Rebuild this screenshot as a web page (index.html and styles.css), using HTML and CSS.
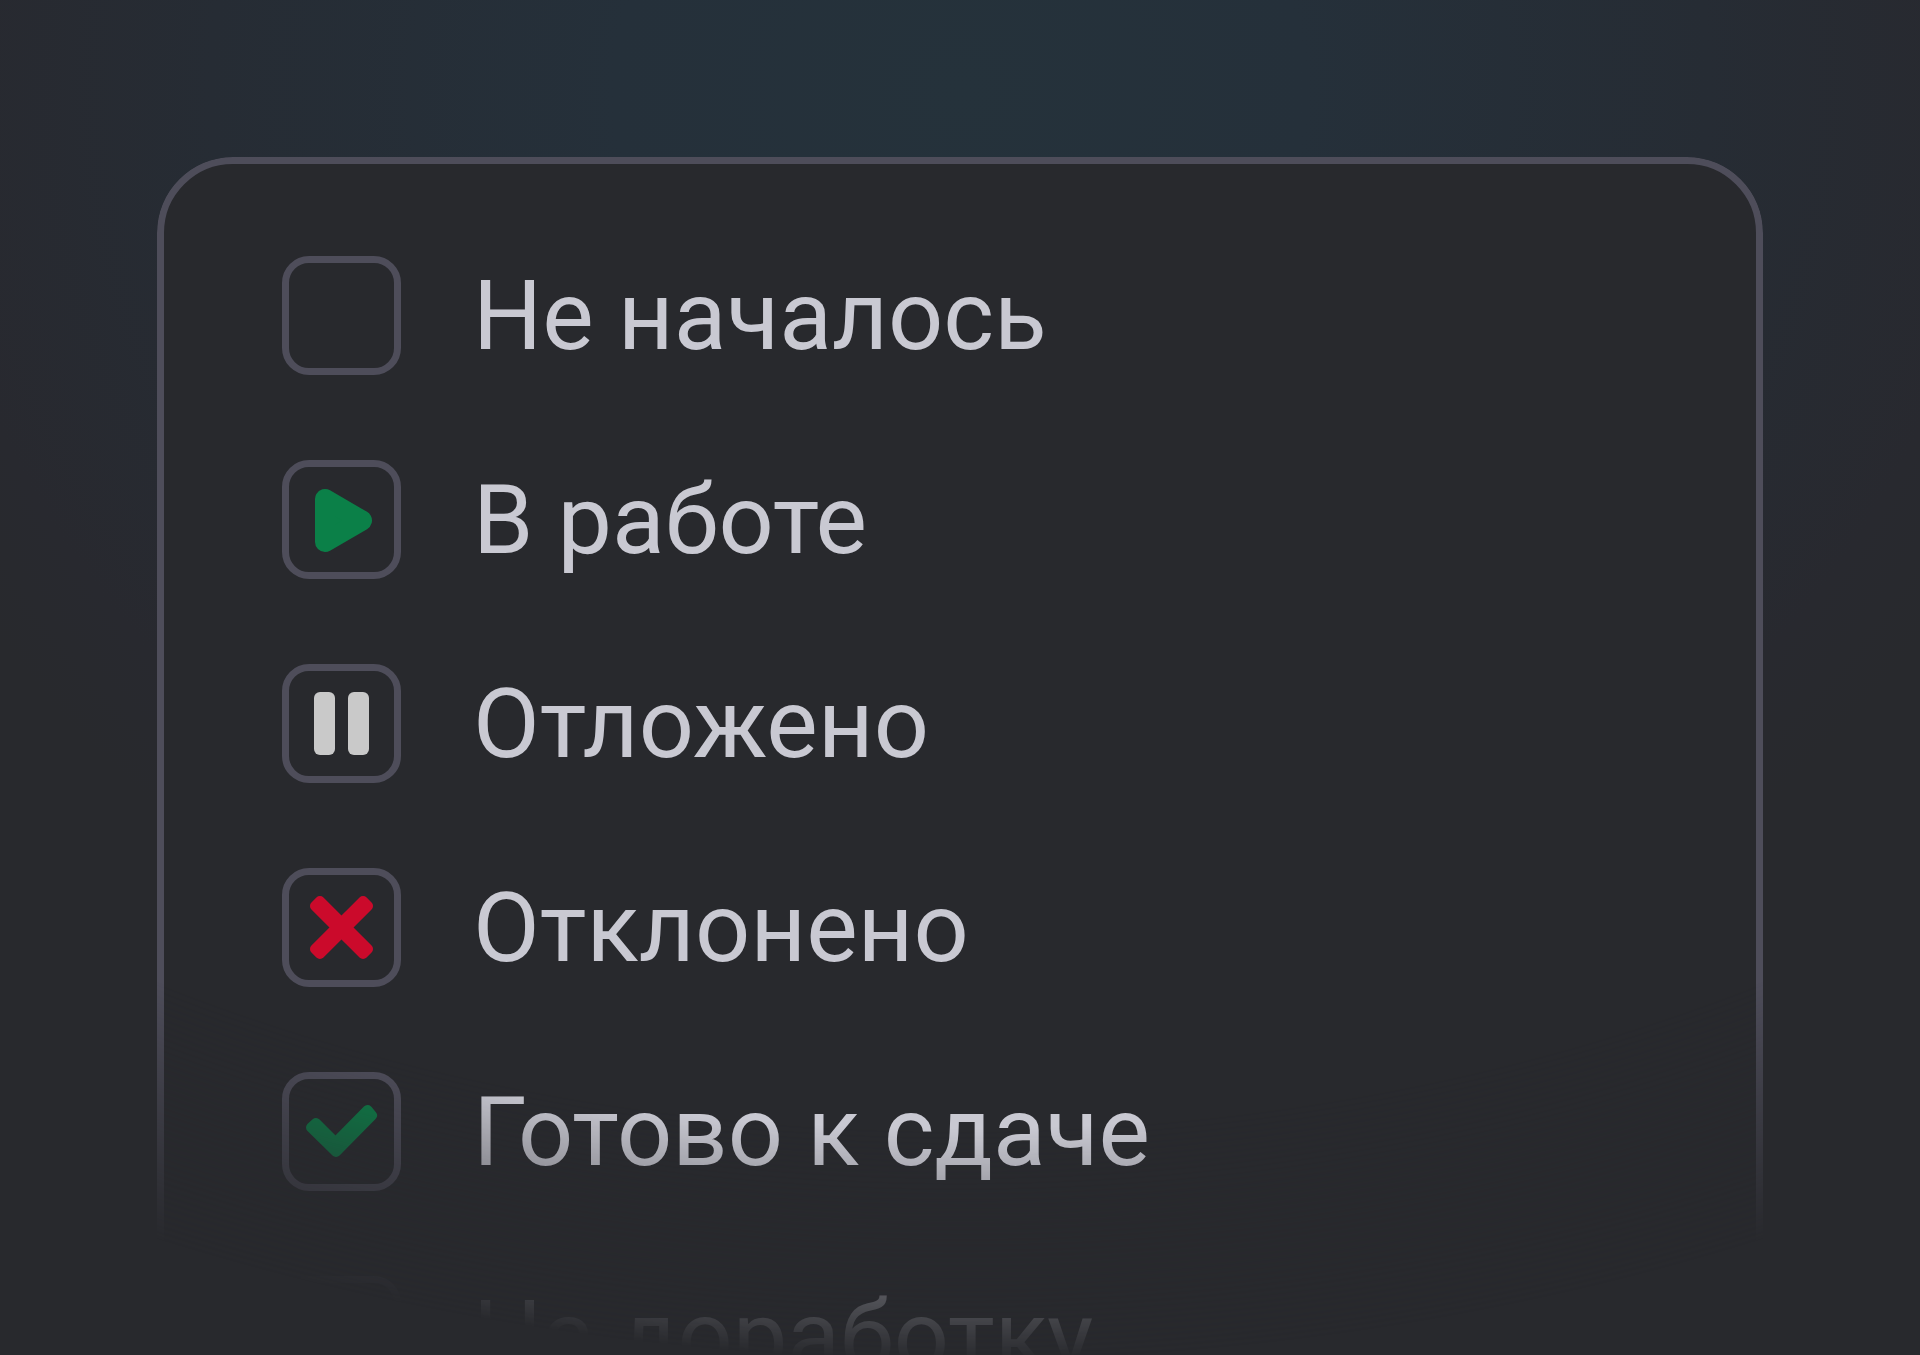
FILE: index.html
```html
<!DOCTYPE html>
<html lang="ru">
<head>
  <meta charset="UTF-8" />
  <title>Статусы задач</title>
  <meta name="viewport" content="width=device-width, initial-scale=1.0" />
  <link rel="stylesheet" href="styles.css">
</head>
<body>
  <main class="card">
    <label class="status">
      <span class="box">
        <input type="checkbox">
      </span>
      <span class="name">Не началось</span>
    </label>

    <label class="status">
      <span class="box">
        <input type="checkbox" checked>
        <svg class="icon green" viewBox="0 0 119 119" aria-hidden="true">
          <path d="M43 39 L43 82 L80 60.5 Z" stroke-width="20" />
        </svg>
      </span>
      <span class="name">В работе</span>
    </label>

    <label class="status">
      <span class="box">
        <input type="checkbox" checked>
        <svg class="icon grey" viewBox="0 0 119 119" aria-hidden="true">
          <rect x="32" y="28" width="21" height="63" rx="6" stroke="none" />
          <rect x="66" y="28" width="21" height="63" rx="6" stroke="none" />
        </svg>
      </span>
      <span class="name">Отложено</span>
    </label>

    <label class="status">
      <span class="box">
        <input type="checkbox" checked>
        <svg class="icon red" viewBox="0 0 119 119" aria-hidden="true">
          <g transform="translate(59.5 59.5) rotate(45)" stroke="none">
            <rect x="-39" y="-8.5" width="78" height="17" rx="5" />
            <rect x="-8.5" y="-39" width="17" height="78" rx="5" />
          </g>
        </svg>
      </span>
      <span class="name">Отклонено</span>
    </label>

    <label class="status">
      <span class="box">
        <input type="checkbox" checked>
        <svg class="icon green" viewBox="0 0 119 119" aria-hidden="true">
          <path d="M34 51 L53.5 70.5 L85.5 38 L90 43.5 L54 80 L29 55.5 Z" stroke-width="10" />
        </svg>
      </span>
      <span class="name">Готово к сдаче</span>
    </label>

    <label class="status">
      <span class="box">
        <input type="checkbox">
      </span>
      <span class="name">На доработку</span>
    </label>
  </main>
</body>
</html>
```
FILE: styles.css
```css
* {
  box-sizing: border-box;
}
html {
  background: #28292d;
}
body {
  margin: 0;
  height: 100vh;
  overflow: hidden;
  padding: 157px 157px 0;
  background: radial-gradient(ellipse 60% 74% at 50% 90px, #25323b 0%, #25303a 30%, #262c34 65%, #28292f 90%, #28292d 100%) no-repeat;
  color: #c9c9d2;
  font-family: Roboto, sans-serif;
}
/* the list fades out towards the bottom, sooner at the sides */
.card {
  display: flex;
  flex-direction: column;
  gap: 85px;
  padding: 92px 118px;
  border: 7px solid #4e4d5a;
  border-radius: 76px;
  background: #28292d;
  -webkit-mask-image: radial-gradient(ellipse 1950px 1360px at 50% -157px, #000 83%, transparent 100%);
  mask-image: radial-gradient(ellipse 1950px 1360px at 50% -157px, #000 83%, transparent 100%);
}
.status {
  display: flex;
  align-items: center;
  gap: 72px;
  cursor: pointer;
}
.box {
  display: grid;
  flex: none;
  width: 119px;
  height: 119px;
}
.box input,
.icon {
  grid-area: 1 / 1;
  width: 100%;
  height: 100%;
  margin: 0;
}
.box input {
  appearance: none;
  border: 7px solid #4e4d5a;
  border-radius: 27px;
}
.icon {
  fill: currentColor;
  stroke: currentColor;
  stroke-linejoin: round;
  pointer-events: none;
}
.green {
  color: #0b8048;
}
.grey {
  color: #c9c9c9;
}
.red {
  color: #cb0a2b;
}
.name {
  font-size: 97px;
  line-height: 112px;
  white-space: nowrap;
}
```
